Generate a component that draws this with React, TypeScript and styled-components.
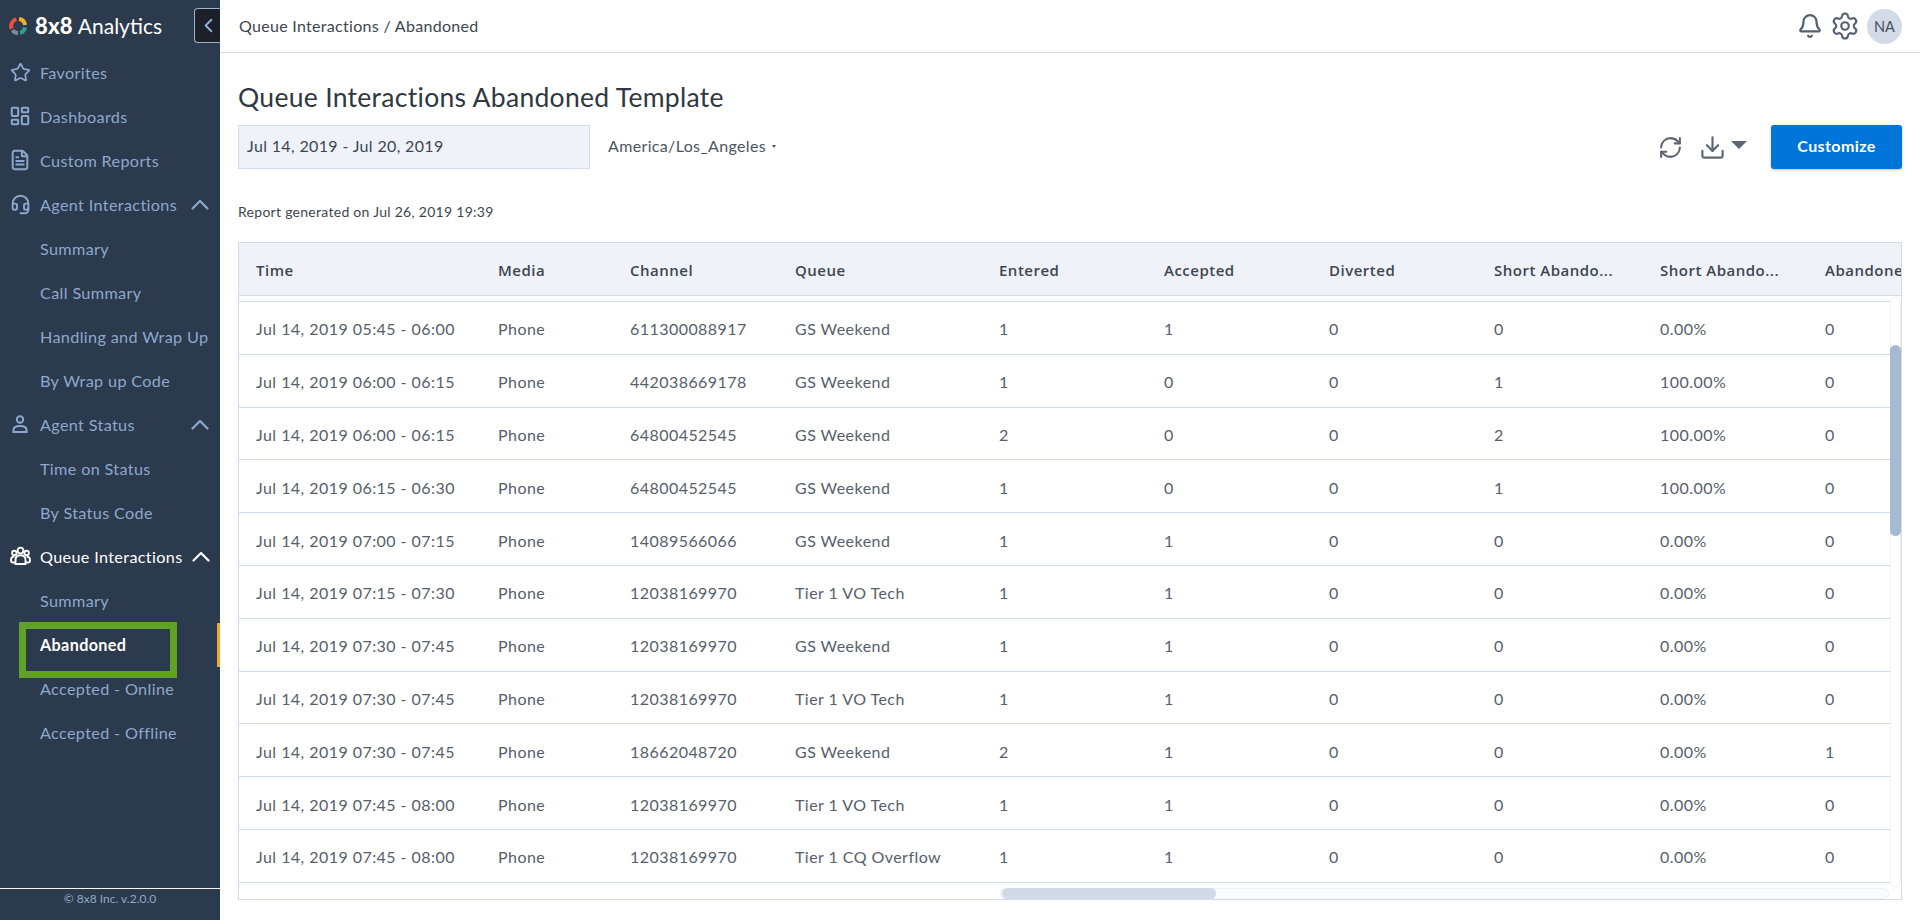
import React from "react";
import styled, { createGlobalStyle } from "styled-components";
import { Bell, ChevronLeft, Download, FileText, Headset, LayoutDashboard, RefreshCw, Settings, Star } from "lucide-react";

const FONT = `Lato, "Open Sans", sans-serif`;
const COLUMNS = "242px 132px 165px 204px 165px 165px 165px 166px 165px 165px";

const GlobalStyle = createGlobalStyle`
  html, body { margin: 0; padding: 0; height: 100%; overflow: hidden; background: #fff; }
  body { font-family: ${FONT}; color: #3d4650; }
  * { box-sizing: border-box; }
`;

const Page = styled.div`
  display: flex;
  width: 1920px;
  height: 920px;
  overflow: hidden;
`;

const Sidebar = styled.aside`
  flex: 0 0 220px;
  width: 220px;
  min-width: 0;
  height: 100%;
  background: #2b3a4c;
  display: flex;
  flex-direction: column;
  position: relative;
`;

const Brand = styled.div`
  height: 51px;
  flex: none;
  display: flex;
  align-items: center;
  padding-left: 9px;
  color: #fff;
`;

const BrandMark = styled.b`
  font-size: 22px;
  font-weight: 900;
  margin-left: 8px;
  letter-spacing: 0.2px;
`;

const BrandName = styled.span`
  font-size: 21px;
  margin-left: 5px;
`;

const Collapse = styled.button`
  margin-left: auto;
  width: 26px;
  height: 35px;
  padding: 0 0 0 2px;
  display: flex;
  align-items: center;
  justify-content: flex-start;
  background: #1b2029;
  color: #8fb0dc;
  border: 1px solid #9fb2c9;
  border-right: 0;
  border-radius: 4px 0 0 4px;
`;

const Nav = styled.nav`
  flex: 1;
  display: flex;
  flex-direction: column;
`;

const NavItem = styled.div<{ $active?: boolean; $open?: boolean; $child?: boolean }>`
  height: 44px;
  flex: none;
  display: flex;
  align-items: center;
  padding-left: ${(p) => (p.$child ? "40px" : "9px")};
  padding-right: 11px;
  padding-bottom: 2px;
  gap: 9px;
  font-size: 16.2px;
  letter-spacing: 0.35px;
  color: ${(p) => (p.$active || p.$open ? "#fff" : "#8ea8cd")};
  font-weight: ${(p) => (p.$active ? 700 : 400)};
  border-right: ${(p) => (p.$active ? "3px solid #f0a52f" : "0")};
  white-space: nowrap;
`;

const NavIcon = styled.span`
  width: 22px;
  height: 22px;
  display: flex;
  align-items: center;
  justify-content: center;
  flex: none;
`;

const NavChevron = styled.svg`
  margin-left: auto;
  flex: none;
  width: 18px;
  height: 11px;
  fill: none;
  stroke: currentColor;
  stroke-width: 2.2;
  stroke-linecap: round;
  stroke-linejoin: round;
`;

const Highlight = styled.div`
  position: absolute;
  left: 19px;
  top: 622px;
  width: 158px;
  height: 56px;
  border: 7px solid #5fa226;
  pointer-events: none;
`;

const SideFooter = styled.footer`
  height: 32px;
  flex: none;
  border-top: 1px solid #f4f6f9;
  text-align: center;
  font-size: 12px;
  line-height: 20px;
  color: #92a9c8;
`;

const Main = styled.main`
  flex: 1;
  min-width: 0;
  display: flex;
  flex-direction: column;
`;

const TopBar = styled.header`
  height: 53px;
  flex: none;
  border-bottom: 1px solid #d3dde9;
  display: flex;
  align-items: center;
  padding: 0 18px 0 19px;
  color: #3d4650;
`;

const Breadcrumb = styled.div`
  font-size: 16px;
  letter-spacing: 0.3px;
  padding-bottom: 1px;
  margin-right: auto;
`;

const Avatar = styled.div`
  width: 35px;
  height: 35px;
  border-radius: 50%;
  background: #d2dbe7;
  margin-left: 7px;
  display: flex;
  align-items: center;
  justify-content: center;
  font-size: 14.5px;
  color: #46505c;
`;

const TopIcon = styled.span<{ $gap?: number }>`
  display: flex;
  margin-left: ${(p) => p.$gap ?? 6}px;
  color: #56616e;
`;

const Content = styled.div`
  flex: 1;
  min-height: 0;
  padding: 0 18px 20px;
  display: flex;
  flex-direction: column;
`;

const Title = styled.h1`
  margin: 28px 0 0;
  font-size: 26.5px;
  line-height: 32px;
  font-weight: 400;
  letter-spacing: 0.3px;
  color: #2f3842;
`;

const Controls = styled.div`
  display: flex;
  align-items: center;
  height: 44px;
  margin-top: 12px;
`;

const DateBox = styled.div`
  width: 352px;
  height: 44px;
  background: #eff2f8;
  border: 1px solid #d2dcea;
  padding: 0 0 3px 8px;
  display: flex;
  align-items: center;
  font-size: 16px;
  letter-spacing: 0.35px;
`;

const Zone = styled.div`
  margin-left: 18px;
  padding-bottom: 4px;
  font-size: 16px;
  letter-spacing: 0.35px;
  color: #4b5561;
  display: flex;
  align-items: center;
  gap: 6px;
  margin-right: auto;
`;

const TinyCaret = styled.i`
  width: 0;
  height: 0;
  margin-top: 2px;
  border: 2.5px solid transparent;
  border-top: 3px solid #4b5561;
  border-bottom: 0;
`;

const ToolIcon = styled.span`
  display: flex;
  color: #5c6773;
`;

const DownloadGroup = styled.span`
  display: flex;
  align-items: center;
  gap: 5px;
  margin: 0 24px 0 16px;
  color: #5c6773;
`;

const BigCaret = styled.i`
  width: 0;
  height: 0;
  margin-top: -4px;
  border-left: 8px solid transparent;
  border-right: 8px solid transparent;
  border-top: 8px solid #5c6773;
`;

const Customize = styled.button`
  width: 131px;
  height: 44px;
  border: 0;
  padding: 0 0 4px;
  border-radius: 3px;
  background: #0075d9;
  box-shadow: 0 1px 3px rgba(0, 0, 0, 0.25);
  color: #fff;
  font: 700 16px ${FONT};
  letter-spacing: 0.4px;
`;

const Generated = styled.div`
  margin-top: 34px;
  font-size: 14px;
  line-height: 18px;
  letter-spacing: 0.28px;
  color: #3d4650;
`;

const TableBox = styled.section`
  margin-top: 21px;
  width: 1664px;
  height: 658px;
  border: 1px solid #d2dcea;
  position: relative;
  overflow: hidden;
`;

const HeadRow = styled.div`
  display: grid;
  grid-template-columns: ${COLUMNS};
  height: 53px;
  padding-top: 1px;
  align-items: center;
  background: #eff2f8;
  border-bottom: 1px solid #d2dcea;
  font-family: "Open Sans", sans-serif;
  font-size: 15px;
  font-weight: 600;
  letter-spacing: 0.5px;
  color: #3d4650;
`;

const Rows = styled.div`
  margin-top: 5px;
  border-top: 1px solid #d2dcea;
`;

const Row = styled.div`
  display: grid;
  grid-template-columns: ${COLUMNS};
  height: 52.8px;
  padding-top: 1px;
  align-items: center;
  border-bottom: 1px solid #d2dcea;
  font-size: 16px;
  letter-spacing: 0.45px;
  color: #56606b;
`;

const Cell = styled.div`
  padding: 1px 0 0 17px;
  white-space: nowrap;
  overflow: hidden;
`;

const VTrack = styled.div`
  position: absolute;
  right: 0;
  top: 54px;
  bottom: 12px;
  width: 11px;
  background: #fff;
  border: 1px solid #eef1f5;
  border-radius: 6px;
`;

const VThumb = styled.div`
  position: absolute;
  left: -1px;
  right: -1px;
  top: 47px;
  height: 191px;
  background: #a5b9d3;
  border-radius: 6px;
`;

const HTrack = styled.div`
  position: absolute;
  left: 761px;
  right: 12px;
  bottom: 0;
  height: 11px;
  background: #fafbfc;
  border: 1px solid #eef1f5;
  border-radius: 6px;
`;

const HThumb = styled.div`
  position: absolute;
  left: 1px;
  top: -1px;
  bottom: -1px;
  width: 214px;
  background: #d0dbe7;
  border-radius: 6px;
`;

const Ring = () => (
  <svg width="18" height="18" viewBox="0 0 34 34" fill="none" strokeWidth="7.5">
    <path d="M5 22A13.5 13.5 0 0 1 14 4" stroke="#e8503f" />
    <path d="M19 3.7A13.5 13.5 0 0 1 30.4 15" stroke="#f2b02e" />
    <path d="M30.3 19.5A13.5 13.5 0 0 1 21 30" stroke="#2fa58f" />
    <path d="M17 30.5A13.5 13.5 0 0 1 6.5 25" stroke="#7b8a93" />
  </svg>
);

const PersonIcon = () => (
  <svg width="20" height="20" viewBox="0 0 20 20" fill="none" stroke="currentColor" strokeWidth="2">
    <circle cx="10" cy="5.5" r="3.2" />
    <path d="M3.5 18v-2c0-2.500 2.500-4 6.500-4s6.500 1.500 6.500 4v2z" />
  </svg>
);

const GroupIcon = () => (
  <svg width="21" height="20" viewBox="0 0 21 20" fill="none" stroke="currentColor" strokeWidth="1.9">
    <circle cx="10.500" cy="4.500" r="2.900" />
    <circle cx="4.300" cy="7" r="2.200" />
    <circle cx="16.700" cy="7" r="2.200" />
    <path d="M5.500 18v-4c0-3 2-4.800 5-4.800s5 1.800 5 4.800v4z" />
    <path d="M5.500 16.500H2.800C1.600 16.500 1 15.500 1 14.200 1 11.800 2.400 10.500 4.500 10.500" />
    <path d="M15.500 16.500h2.700c1.200 0 1.800-1 1.800-2.300 0-2.400-1.400-3.700-3.500-3.700" />
  </svg>
);

type Item = { label: string; icon?: React.ReactNode; group?: boolean; open?: boolean; active?: boolean };

const NAV: Item[] = [
  { label: "Favorites", icon: <Star size={21} strokeWidth={2} /> },
  { label: "Dashboards", icon: <LayoutDashboard size={22} strokeWidth={2.2} /> },
  { label: "Custom Reports", icon: <FileText size={22} strokeWidth={2.1} /> },
  { label: "Agent Interactions", icon: <Headset size={21} strokeWidth={2.2} />, group: true },
  { label: "Summary" },
  { label: "Call Summary" },
  { label: "Handling and Wrap Up" },
  { label: "By Wrap up Code" },
  { label: "Agent Status", icon: <PersonIcon />, group: true },
  { label: "Time on Status" },
  { label: "By Status Code" },
  { label: "Queue Interactions", icon: <GroupIcon />, group: true, open: true },
  { label: "Summary" },
  { label: "Abandoned", active: true },
  { label: "Accepted - Online" },
  { label: "Accepted - Offline" },
];

const HEADERS = ["Time", "Media", "Channel", "Queue", "Entered", "Accepted", "Diverted", "Short Abando...", "Short Abando...", "Abandoned"];

const VO = "Tier 1 VO Tech";
const GS = "GS Weekend";
const ROWS: string[][] = [
  ["05:45 - 06:00", "611300088917", GS, "1", "1", "0", "0", "0.00%", "0"],
  ["06:00 - 06:15", "442038669178", GS, "1", "0", "0", "1", "100.00%", "0"],
  ["06:00 - 06:15", "64800452545", GS, "2", "0", "0", "2", "100.00%", "0"],
  ["06:15 - 06:30", "64800452545", GS, "1", "0", "0", "1", "100.00%", "0"],
  ["07:00 - 07:15", "14089566066", GS, "1", "1", "0", "0", "0.00%", "0"],
  ["07:15 - 07:30", "12038169970", VO, "1", "1", "0", "0", "0.00%", "0"],
  ["07:30 - 07:45", "12038169970", GS, "1", "1", "0", "0", "0.00%", "0"],
  ["07:30 - 07:45", "12038169970", VO, "1", "1", "0", "0", "0.00%", "0"],
  ["07:30 - 07:45", "18662048720", GS, "2", "1", "0", "0", "0.00%", "1"],
  ["07:45 - 08:00", "12038169970", VO, "1", "1", "0", "0", "0.00%", "0"],
  ["07:45 - 08:00", "12038169970", "Tier 1 CQ Overflow", "1", "1", "0", "0", "0.00%", "0"],
];

export default function App() {
  return (
    <Page>
      <GlobalStyle />
      <Sidebar>
        <Brand>
          <Ring />
          <BrandMark>8x8</BrandMark>
          <BrandName>Analytics</BrandName>
          <Collapse>
            <ChevronLeft size={23} strokeWidth={2} />
          </Collapse>
        </Brand>
        <Nav>
          {NAV.map((item, i) => (
            <NavItem key={i} $active={item.active} $open={item.open} $child={!item.icon}>
              {item.icon && <NavIcon>{item.icon}</NavIcon>}
              {item.label}
              {item.group && (
                <NavChevron viewBox="0 0 18 11">
                  <path d="M1.500 9.500 9 2l7.500 7.500" />
                </NavChevron>
              )}
            </NavItem>
          ))}
        </Nav>
        <SideFooter>© 8x8 Inc. v.2.0.0</SideFooter>
        <Highlight />
      </Sidebar>
      <Main>
        <TopBar>
          <Breadcrumb>Queue Interactions / Abandoned</Breadcrumb>
          <TopIcon>
            <Bell size={26} strokeWidth={2} />
          </TopIcon>
          <TopIcon $gap={7}>
            <Settings size={30} strokeWidth={1.7} />
          </TopIcon>
          <Avatar>NA</Avatar>
        </TopBar>
        <Content>
          <Title>Queue Interactions Abandoned Template</Title>
          <Controls>
            <DateBox>Jul 14, 2019 - Jul 20, 2019</DateBox>
            <Zone>
              America/Los_Angeles <TinyCaret />
            </Zone>
            <ToolIcon>
              <RefreshCw size={25} strokeWidth={2} />
            </ToolIcon>
            <DownloadGroup>
              <Download size={27} strokeWidth={1.9} />
              <BigCaret />
            </DownloadGroup>
            <Customize>Customize</Customize>
          </Controls>
          <Generated>Report generated on Jul 26, 2019 19:39</Generated>
          <TableBox>
            <HeadRow>
              {HEADERS.map((h, i) => (
                <Cell key={i}>{h}</Cell>
              ))}
            </HeadRow>
            <Rows>
              {ROWS.map((r, i) => (
                <Row key={i}>
                  <Cell>Jul 14, 2019 {r[0]}</Cell>
                  <Cell>Phone</Cell>
                  {r.slice(1).map((v, j) => (
                    <Cell key={j}>{v}</Cell>
                  ))}
                </Row>
              ))}
            </Rows>
            <VTrack>
              <VThumb />
            </VTrack>
            <HTrack>
              <HThumb />
            </HTrack>
          </TableBox>
        </Content>
      </Main>
    </Page>
  );
}
